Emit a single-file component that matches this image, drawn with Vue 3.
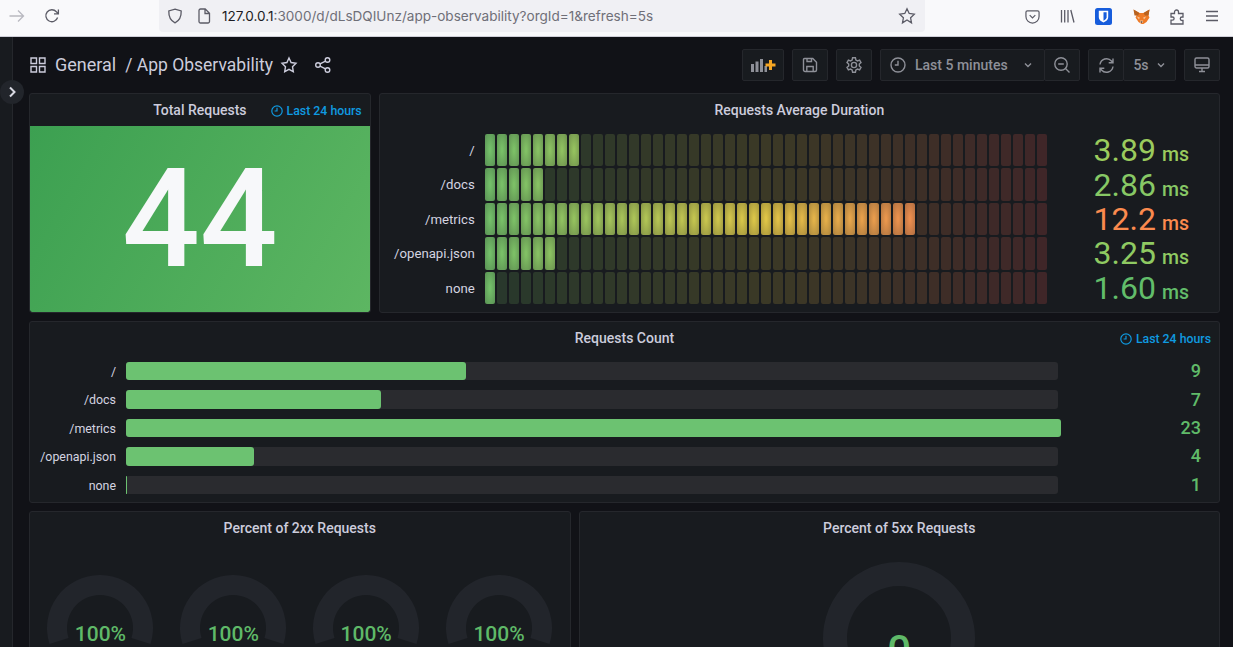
<template>
  <div class="page">
    <header class="browser">
      <svg class="b-icon arrow" width="18" height="18" viewBox="0 0 18 18"><path d="M1.500 9h14M10 3.500 15.500 9 10 14.500" /></svg>
      <svg class="b-icon reload" width="18" height="18" viewBox="0 0 18 18"><path d="M14.600 10.500A6 6 0 1 1 13.400 4.800L15.200 6.600M15.400 2.400v4.400H11" /></svg>
      <div class="urlbar">
        <svg class="b-icon" width="16" height="16" viewBox="0 0 16 16"><path d="M8 1.200 14.200 3c.2 5.500-1.500 9.500-6.200 11.800C3.300 12.500 1.600 8.500 1.800 3Z" /></svg>
        <svg class="b-icon page-ic" width="14" height="16" viewBox="0 0 14 16"><path d="M2 2.500A1.500 1.500 0 0 1 3.500 1h4.700L12.500 5.300v8.200A1.500 1.500 0 0 1 11 15H3.500A1.500 1.500 0 0 1 2 13.500ZM8 1v4.500h4.500" /></svg>
        <span class="url"><b>127.0.0.1</b>:3000/d/dLsDQIUnz/app-observability?orgId=1&amp;refresh=5s</span>
        <svg class="b-icon url-star" width="18" height="18" viewBox="0 0 18 18"><path d="m9 1.800 2.200 4.700 5.100.7-3.700 3.600.9 5.100L9 13l-4.500 2.900.9-5.100L1.700 7.200l5.100-.7Z" /></svg>
      </div>
      <div class="addons">
        <svg class="b-icon" width="15" height="15" viewBox="0 0 16 16"><path d="M2.500 2h11A1.500 1.500 0 0 1 15 3.500V8A7 7 0 0 1 1 8V3.500A1.500 1.500 0 0 1 2.500 2ZM5 6.500l3 3 3-3" /></svg>
        <svg class="b-icon" width="15" height="16" viewBox="0 0 15 16"><path d="M1.500 2v12.500M4.700 2v12.500M8 2v12.500M10.800 2l3.200 12.500" /></svg>
        <svg width="17" height="17" viewBox="0 0 17 17"><rect width="17" height="17" rx="2.500" fill="#175ddc" /><path d="M3.800 2.800h9.400v6.400c0 2.500-2.300 4.200-4.700 5.300-2.400-1.100-4.700-2.800-4.700-5.300Z" fill="#fff" /><path d="M8.500 4.300h3.100v4.900c0 1.500-1.600 2.700-3.100 3.500Z" fill="#175ddc" /></svg>
        <svg width="17" height="17" viewBox="0 0 17 17"><path d="M.5 1.500 6.500 5h4l6-3.500-1 6 1 2-3 4.500-3 2h-2l-3-2-3-4.500 1-2Z" fill="#ee7a26" /><path d="M.5 1.500 6.500 5 5 7.500 1.500 7.500ZM16.500 1.500 10.500 5 12 7.500l3.500 0Z" fill="#b8621f" /><path d="M6.700 12.500h3.600l-.8 2.500h-2ZM3.800 8.500 6.800 9.500 6 11.500ZM13.200 8.500l-3 1 .8 2Z" fill="#f4c59b" /><path d="M7.500 13.500h2l-1 1.500Z" fill="#2a2320" /></svg>
        <svg class="b-icon" width="15" height="17" viewBox="0 0 15 17"><path d="M1 5.500h3.500V4a2 2 0 1 1 4 0v1.500H13v3.500h-1a1.500 1.500 0 0 0 0 3.500h1v3.500H1v-3.800h1.500a1.600 1.600 0 0 0 0-3.200H1Z" /></svg>
        <svg class="b-icon" width="14" height="14" viewBox="0 0 14 14"><path d="M1 2.500h12M1 7h12M1 11.500h12" /></svg>
      </div>
    </header>

    <div class="app">
      <aside class="sidebar">
        <span class="toggle">
          <svg width="14" height="14" viewBox="0 0 14 14"><path d="m5 2.500 4.500 4.500L5 11.500" /></svg>
        </span>
      </aside>

      <main class="main">
        <div class="toolbar">
          <svg class="t-icon apps" width="16" height="16" viewBox="0 0 16 16"><path d="M1 1h5.500v5.500H1ZM9.500 1H15v5.500H9.500ZM1 9.500h5.500V15H1ZM9.500 9.500H15V15H9.500Z" /></svg>
          <span class="crumb">General</span>
          <span class="crumb title">/ App Observability</span>
          <svg class="t-icon star" width="18" height="18" viewBox="0 0 18 18"><path d="m9 2 2.100 4.500 4.900.7-3.500 3.500.8 4.900L9 13.300l-4.300 2.300.8-4.900L2 7.200l4.900-.7Z" /></svg>
          <svg class="t-icon share" width="18" height="18" viewBox="0 0 18 18"><circle cx="13.500" cy="4" r="2.300" /><circle cx="4" cy="9" r="2.300" /><circle cx="13.500" cy="14" r="2.300" /><path d="m6 7.900 5.500-2.800M6 10.100l5.500 2.800" /></svg>

          <div class="actions">
            <button class="btn add-panel">
              <svg width="26" height="16" viewBox="0 0 26 16"><path d="M1 7h3v8H1ZM5.500 4.500h3V15h-3ZM10 2h3v13h-3ZM14.500 9h2.500v6h-2.500Z" fill="#8e9098" /><path d="M19 3h3v3.500h3.500v3H22V13h-3V9.500h-3.500v-3H19Z" fill="#f5a623" /></svg>
            </button>
            <button class="btn square">
              <svg class="t-icon" width="16" height="16" viewBox="0 0 16 16"><path d="M2.500 1.500h8.300l3.700 3.700v7.800a1.500 1.500 0 0 1-1.500 1.500H3A1.500 1.500 0 0 1 1.500 13V2.500a1 1 0 0 1 1-1ZM4.800 14.500v-5h6.400v5M5 1.500v3h4.500v-3" /></svg>
            </button>
            <button class="btn square">
              <svg class="t-icon" width="18" height="18" viewBox="0 0 18 18"><circle cx="9" cy="9" r="2.600" /><path d="M7.600 1.800h2.800l.5 2.200 1.600.9 2.100-.7 1.400 2.400-1.700 1.500v1.800l1.700 1.500-1.400 2.400-2.100-.7-1.600.9-.5 2.200H7.600l-.5-2.200-1.600-.9-2.100.7L2 11.400l1.700-1.500V8.100L2 6.600 3.400 4.200l2.100.7 1.600-.9Z" /></svg>
            </button>
            <div class="group">
              <button class="btn time">
                <svg class="t-icon" width="16" height="16" viewBox="0 0 16 16"><circle cx="8" cy="8" r="7" /><path d="M8 3.800V8H4.800" /></svg>
                <span>Last 5 minutes</span>
                <svg class="t-icon caret" width="10" height="10" viewBox="0 0 10 10"><path d="m2 3.500 3 3 3-3" /></svg>
              </button>
              <button class="btn square">
                <svg class="t-icon" width="18" height="18" viewBox="0 0 18 18"><circle cx="8" cy="8" r="6.200" /><path d="M5.200 8h5.600M12.500 12.500l4 4" /></svg>
              </button>
            </div>
            <div class="group">
              <button class="btn refresh">
                <svg class="t-icon" width="17" height="17" viewBox="0 0 17 17"><path d="M2 7.500A6.600 6.600 0 0 1 13.500 4l1.500 1.800M15 1.500v4.300h-4.300M15 9.500A6.600 6.600 0 0 1 3.500 13L2 11.200M2 15.500v-4.300h4.300" /></svg>
              </button>
              <button class="btn interval">
                <span>5s</span>
                <svg class="t-icon caret" width="10" height="10" viewBox="0 0 10 10"><path d="m2 3.500 3 3 3-3" /></svg>
              </button>
            </div>
            <button class="btn square">
              <svg class="t-icon" width="16" height="16" viewBox="0 0 16 16"><path d="M2.500 1h11A1.500 1.500 0 0 1 15 2.500v7a1.500 1.500 0 0 1-1.500 1.500h-11A1.500 1.500 0 0 1 1 9.500v-7A1.500 1.500 0 0 1 2.500 1ZM1 8h14M5 14.500h6M8 11v3.500" /></svg>
            </button>
          </div>
        </div>

        <div class="grid">
          <section class="panel span-7">
            <div class="panel-head">
              <h2>Total Requests</h2>
              <span class="time-info">
                <svg width="12" height="12" viewBox="0 0 12 12"><circle cx="6" cy="6" r="5.200" /><path d="M6 2.800V6H3.600" /></svg>
                Last 24 hours
              </span>
            </div>
            <div class="stat">44</div>
          </section>

          <section class="panel span-17">
            <div class="panel-head"><h2>Requests Average Duration</h2></div>
            <div class="led-list">
              <div v-for="row in ledRows" :key="row.label" class="led-row">
                <span class="led-label">{{ row.label }}</span>
                <div class="cells">
                  <i v-for="n in CELL_COUNT" :key="n" class="cell" :style="cellStyle(n - 1, row.lit)"></i>
                </div>
                <span class="led-value" :style="{ color: row.color }">{{ row.value }}<small>ms</small></span>
              </div>
            </div>
          </section>

          <section class="panel span-24">
            <div class="panel-head">
              <h2>Requests Count</h2>
              <span class="time-info">
                <svg width="12" height="12" viewBox="0 0 12 12"><circle cx="6" cy="6" r="5.200" /><path d="M6 2.800V6H3.600" /></svg>
                Last 24 hours
              </span>
            </div>
            <div class="bar-list">
              <div v-for="row in barRows" :key="row.label" class="bar-row">
                <span class="bar-label">{{ row.label }}</span>
                <div class="track">
                  <div class="fill" :style="{ width: row.width + 'px' }"></div>
                </div>
                <span class="bar-value">{{ row.value }}</span>
              </div>
            </div>
          </section>

          <section class="panel span-11">
            <div class="panel-head"><h2>Percent of 2xx Requests</h2></div>
            <div class="gauges">
              <div v-for="n in 4" :key="n" class="gauge small">
                <svg width="106" height="72" viewBox="0 0 106 72"><path :d="gaugePath(53, 20)" /></svg>
                <span>100%</span>
              </div>
            </div>
          </section>

          <section class="panel span-13">
            <div class="panel-head"><h2>Percent of 5xx Requests</h2></div>
            <div class="gauges single">
              <div class="gauge large">
                <svg width="152" height="100" viewBox="0 0 152 100"><path :d="gaugePath(76, 24)" /></svg>
                <span>0</span>
              </div>
            </div>
          </section>
        </div>
      </main>
    </div>
  </div>
</template>

<script setup>
const CELL_COUNT = 47

const ledRows = [
  { label: '/', lit: 8, value: '3.89', color: '#9bcb5d' },
  { label: '/docs', lit: 5, value: '2.86', color: '#87c865' },
  { label: '/metrics', lit: 36, value: '12.2', color: '#fb8a4e' },
  { label: '/openapi.json', lit: 6, value: '3.25', color: '#8fca62' },
  { label: 'none', lit: 1, value: '1.60', color: '#62bd6a' }
]

const barRows = [
  { label: '/', width: 340, value: 9 },
  { label: '/docs', width: 255, value: 7 },
  { label: '/metrics', width: 935, value: 23 },
  { label: '/openapi.json', width: 128, value: 4 },
  { label: 'none', width: 1, value: 1 }
]

// continuous green - yellow - red scale
const GREEN = [115, 191, 105]
const YELLOW = [222, 196, 70]
const RED = [245, 90, 85]

function scaleColor(t) {
  const [a, b, k] = t < 0.5 ? [GREEN, YELLOW, t * 2] : [YELLOW, RED, (t - 0.5) * 2]
  return a.map((v, i) => Math.round(v + (b[i] - v) * k)).join(',')
}

function cellStyle(index, lit) {
  const rgb = scaleColor(index / (CELL_COUNT - 1))
  if (index < lit) {
    return { background: `radial-gradient(rgb(${rgb}) 10%, rgba(${rgb},0.72))` }
  }
  return { background: `rgba(${rgb},0.18)` }
}

// arc opening downward, ends about 17.7 degrees below the horizontal
function gaugePath(r, thickness) {
  const ri = r - thickness
  const a = (17.7 * Math.PI) / 180
  const pt = (rad, dir) => `${(r + dir * rad * Math.cos(a)).toFixed(2)} ${(r + rad * Math.sin(a)).toFixed(2)}`
  return `M${pt(r, -1)}A${r} ${r} 0 1 1 ${pt(r, 1)}L${pt(ri, 1)}A${ri} ${ri} 0 1 0 ${pt(ri, -1)}Z`
}
</script>

<style>
html, body {
  margin: 0;
  height: 100%;
  overflow: hidden;
  background: #111217;
}
</style>

<style scoped>
.page {
  height: 647px;
  overflow: hidden;
  display: flex;
  flex-direction: column;
  font-family: Roboto, "Liberation Sans", sans-serif;
  color: #ccccdc;
}

/* browser chrome */
.browser {
  flex: none;
  height: 37px;
  box-sizing: border-box;
  background: #f9f9fb;
  border-bottom: 1px solid #cfcfd8;
  display: flex;
  align-items: flex-start;
  position: relative;
}
.b-icon {
  flex: none;
  fill: none;
  stroke: #5b5b66;
  stroke-width: 1.300;
}
.arrow {
  margin: 7px 0 0 8px;
  stroke: #b9b9c0;
}
.reload {
  margin: 7px 0 0 17px;
}
.urlbar {
  width: 766px;
  height: 32px;
  margin-left: 98px;
  box-sizing: border-box;
  padding: 0 8px;
  background: #f0f0f4;
  border-radius: 0 0 4px 4px;
  display: flex;
  align-items: center;
}
.page-ic {
  margin-left: 14px;
}
.url {
  margin-left: 11px;
  font-family: Inter, "Liberation Sans", sans-serif;
  font-size: 13.550px;
  color: #6f6f78;
  white-space: nowrap;
}
.url b {
  font-weight: 400;
  color: #1c1b22;
}
.url-star {
  margin-left: auto;
  margin-right: 1px;
}
.addons {
  flex: 1;
  height: 32px;
  padding: 0 14px 0 100px;
  display: flex;
  align-items: center;
  justify-content: space-between;
}

/* grafana shell */
.app {
  flex: 1;
  display: flex;
  min-height: 0;
  background: #111217;
}
.sidebar {
  flex: none;
  width: 12px;
  background: #181b1f;
  border-right: 1px solid #25272c;
  position: relative;
}
.toggle {
  position: absolute;
  left: 0;
  top: 43px;
  width: 24px;
  height: 24px;
  border-radius: 50%;
  background: #22252b;
  display: flex;
  align-items: center;
  justify-content: center;
}
.toggle svg {
  fill: none;
  stroke: #d8d9e2;
  stroke-width: 2;
}
.main {
  flex: 1;
  min-width: 0;
  padding: 12px 13px 0 16px;
}

.toolbar {
  height: 32px;
  margin-bottom: 12px;
  display: flex;
  align-items: center;
}
.t-icon {
  flex: none;
  fill: none;
  stroke: #ccccdc;
  stroke-width: 1.400;
}
.apps {
  margin: 0 9px 0 1px;
}
.crumb {
  font-size: 18px;
  white-space: nowrap;
  padding-bottom: 2px;
}
.crumb.title {
  margin-left: 9px;
  font-size: 17.500px;
  padding-bottom: 0;
}
.star {
  margin-left: 7px;
}
.share {
  margin-left: 16px;
}
.actions {
  margin-left: auto;
  display: flex;
  gap: 8px;
}
.group {
  display: flex;
}
.btn {
  height: 32px;
  box-sizing: border-box;
  padding: 0;
  background: #181b1f;
  border: 1px solid #25272c;
  border-radius: 2px;
  color: #8e9098;
  font: 500 14px Roboto, sans-serif;
  display: flex;
  align-items: center;
  justify-content: center;
}
.btn .t-icon {
  stroke: #8e9098;
}
.group .btn + .btn {
  margin-left: -1px;
}
.add-panel {
  width: 42px;
}
.square {
  width: 36px;
}
.time {
  width: 165px;
  justify-content: flex-start;
  padding-left: 9px;
}
.time span {
  margin-left: 9px;
}
.time .caret {
  margin-left: 15px;
}
.refresh {
  width: 36px;
}
.interval {
  width: 53px;
}
.interval .caret {
  margin-left: 7px;
}

.grid {
  display: grid;
  grid-template-columns: repeat(24, 1fr);
  grid-template-rows: 220px 182px 240px;
  gap: 8px;
}
.span-7 { grid-column: span 7; }
.span-11 { grid-column: span 11; }
.span-13 { grid-column: span 13; }
.span-17 { grid-column: span 17; }
.span-24 { grid-column: span 24; }

.panel {
  min-width: 0;
  min-height: 0;
  box-sizing: border-box;
  background: #181b1f;
  border: 1px solid #25272c;
  border-radius: 3px;
  display: flex;
  flex-direction: column;
  overflow: hidden;
}
.panel-head {
  flex: none;
  height: 32px;
  display: flex;
  align-items: center;
  justify-content: center;
  position: relative;
}
.panel-head h2 {
  margin: 0;
  font-size: 14px;
  font-weight: 500;
  color: #ccccdc;
}
.time-info {
  position: absolute;
  right: 8px;
  top: 10px;
  display: flex;
  align-items: center;
  gap: 4px;
  font-size: 12.300px;
  font-weight: 500;
  color: #0f9ae0;
}
.time-info svg {
  fill: none;
  stroke: #0f9ae0;
  stroke-width: 1.200;
}

.stat {
  flex: 1;
  min-height: 0;
  background: linear-gradient(120deg, #3ca051, #5db662);
  color: #f7f8fa;
  font-size: 137px;
  line-height: 1;
  font-weight: 500;
  display: flex;
  align-items: center;
  justify-content: center;
  border-radius: 0 0 2px 2px;
}

.led-list {
  flex: 1;
  min-height: 0;
  padding: 8px 30px 8px 9px;
  display: grid;
  grid-template-rows: repeat(5, minmax(0, 1fr));
  gap: 2px;
}
.led-row {
  display: grid;
  grid-template-columns: 86px 562px 1fr;
  column-gap: 10px;
  align-items: stretch;
  min-height: 0;
}
.led-label {
  align-self: center;
  text-align: right;
  font-size: 13.200px;
  line-height: 1;
  padding-top: 1px;
  white-space: nowrap;
  color: #d4d4e0;
}
.cells {
  display: flex;
  gap: 2px;
}
.cell {
  flex: 1;
  border-radius: 2px;
}
.led-value {
  align-self: center;
  text-align: right;
  font-size: 32px;
  line-height: 32px;
  white-space: nowrap;
}
.led-value small {
  margin-left: 6px;
  font-size: 19.500px;
  font-weight: 500;
  line-height: 20px;
}

.bar-list {
  flex: 1;
  min-height: 0;
  padding: 8px 18px 8px 10px;
  display: grid;
  grid-template-rows: repeat(5, minmax(0, 1fr));
  gap: 10px;
}
.bar-row {
  display: grid;
  grid-template-columns: 76px 932px 1fr;
  column-gap: 10px;
  align-items: stretch;
  min-height: 0;
}
.bar-label {
  align-self: center;
  text-align: right;
  font-size: 12.400px;
  line-height: 1;
  padding-top: 2px;
  white-space: nowrap;
  color: #d4d4e0;
}
.track {
  background: #2a2b2f;
  border-radius: 3px;
}
.fill {
  height: 100%;
  background: #6cc271;
  border-radius: 3px;
}
.bar-value {
  align-self: center;
  text-align: right;
  font-size: 18px;
  line-height: 1;
  font-weight: 500;
  color: #60bb69;
}

.gauges {
  padding: 31px 4px 0;
  display: grid;
  grid-template-columns: repeat(4, 1fr);
}
.gauges.single {
  padding-top: 18px;
  grid-template-columns: 1fr;
}
.gauge {
  position: relative;
  display: flex;
  justify-content: center;
}
.gauge svg {
  display: block;
  fill: #22252b;
}
.gauge span {
  position: absolute;
  left: 0;
  right: 0;
  text-align: center;
  font-weight: 500;
  line-height: 1;
  color: #5fb968;
}
.gauge.small span {
  top: 49px;
  font-size: 21px;
}
.gauge.large span {
  top: 68px;
  font-size: 42px;
}
</style>
